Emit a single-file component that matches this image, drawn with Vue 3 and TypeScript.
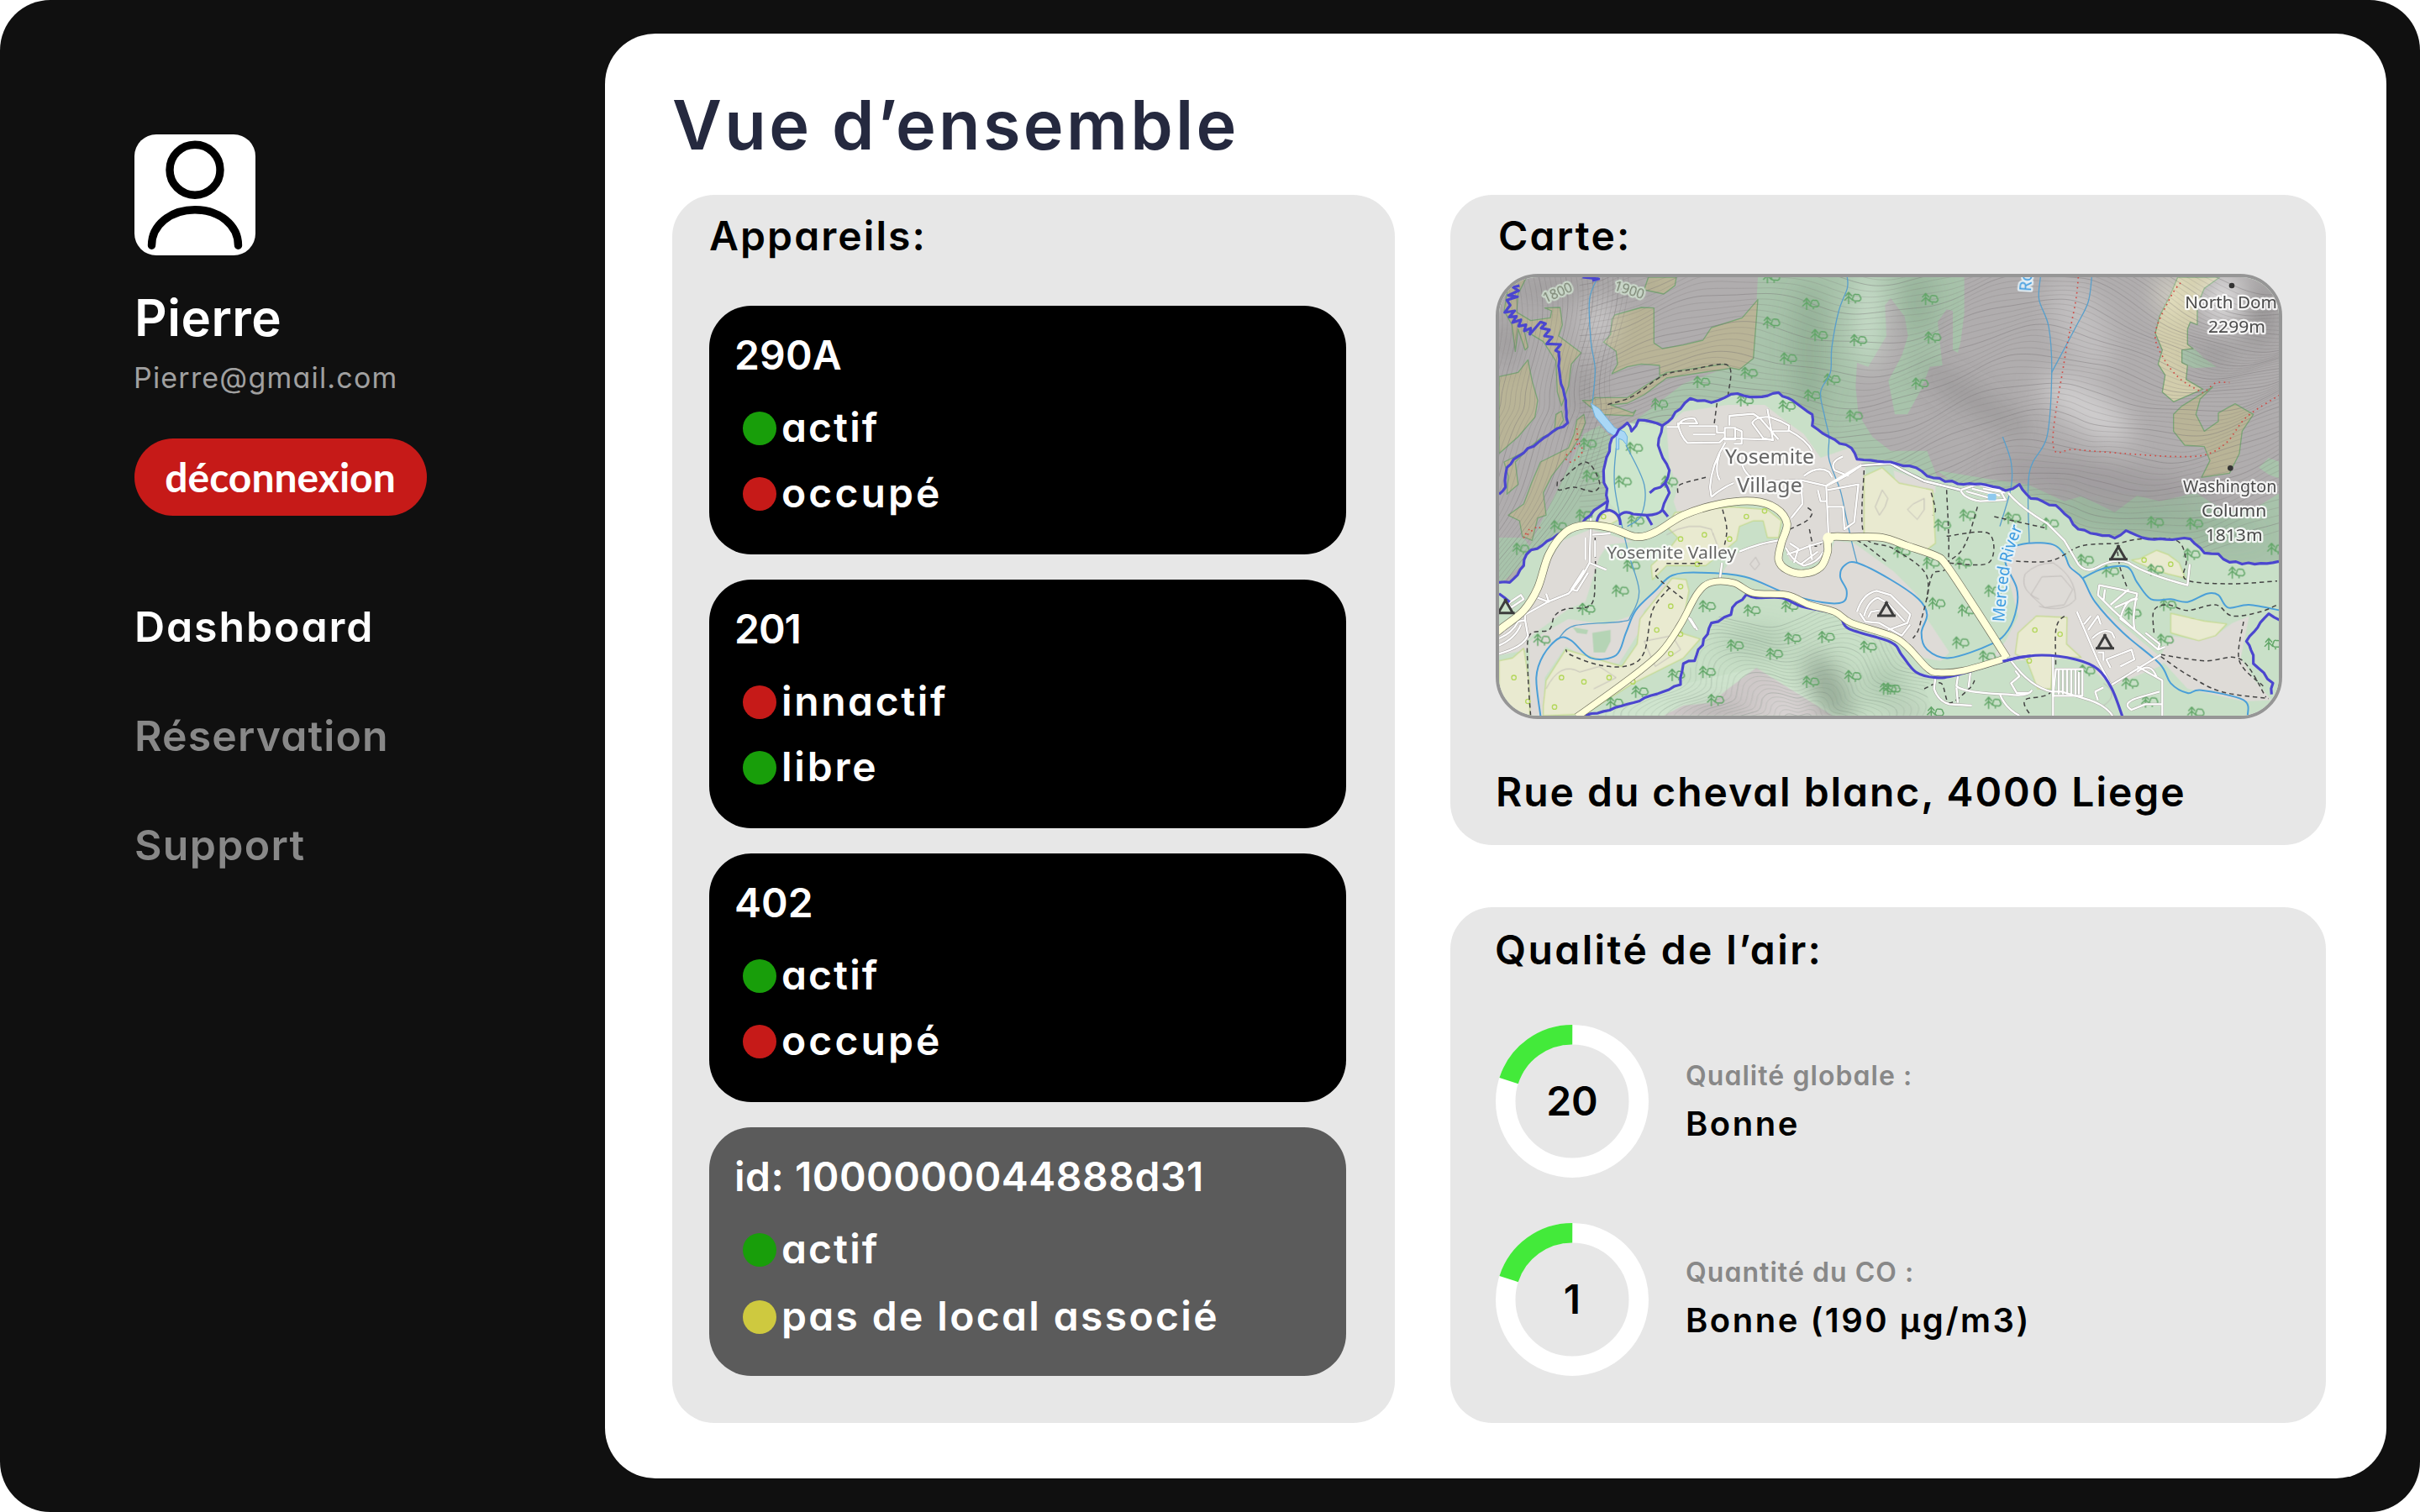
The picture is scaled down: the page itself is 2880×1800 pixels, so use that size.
<script setup lang="ts">
type Tone = 'ok' | 'bad' | 'warn'
interface Status { label: string; tone: Tone; tracking: number }
interface Device { name: string; unassigned?: boolean; tracking: number; statuses: Status[] }

const actif: Status = { label: 'actif', tone: 'ok', tracking: 2.1 }
const occupe: Status = { label: 'occupé', tone: 'bad', tracking: 3.1 }

const devices: Device[] = [
  { name: '290A', tracking: 0.2, statuses: [actif, occupe] },
  {
    name: '201',
    tracking: -1,
    statuses: [
      { label: 'innactif', tone: 'bad', tracking: 2.6 },
      { label: 'libre', tone: 'ok', tracking: 2.8 },
    ],
  },
  { name: '402', tracking: 0, statuses: [actif, occupe] },
  {
    name: 'id: 1000000044888d31',
    tracking: 0.5,
    unassigned: true,
    statuses: [actif, { label: 'pas de local associé', tone: 'warn', tracking: 2.35 }],
  },
]

const menu = [
  { label: 'Dashboard', active: true, tracking: 1.9 },
  { label: 'Réservation', active: false, tracking: 1.1 },
  { label: 'Support', active: false, tracking: 1.3 },
]

const gauges = [
  { value: 20, percent: 20, label: 'Qualité globale :', text: 'Bonne' },
  { value: 1, percent: 20, label: 'Quantité du CO :', text: 'Bonne (190 µg/m3)' },
]
const ringLength = 2 * Math.PI * 79.25

/* ---- map geometry ---- */
function points(src: string): number[][] {
  return src.trim().split(/\s+/).map((p) => p.split(',').map(Number))
}
// Catmull-Rom curve through the listed points
function curve(src: string): string {
  const p = points(src)
  let d = `M${p[0][0]} ${p[0][1]}`
  for (let i = 0; i < p.length - 1; i++) {
    const a = p[Math.max(i - 1, 0)]
    const b = p[i]
    const c = p[i + 1]
    const e = p[Math.min(i + 2, p.length - 1)]
    d += `C${b[0] + (c[0] - a[0]) / 6} ${b[1] + (c[1] - a[1]) / 6} ${c[0] - (e[0] - b[0]) / 6} ${c[1] - (e[1] - b[1]) / 6} ${c[0]} ${c[1]}`
  }
  return d
}
function noise(n: number): number {
  const s = Math.sin(n * 127.1) * 43758.5453
  return s - Math.floor(s)
}
// Small wobble added along a walking trail
function rough(src: string, amp: number): string {
  const p = points(src)
  const out: string[] = [`${p[0][0]},${p[0][1]}`]
  for (let i = 0; i < p.length - 1; i++) {
    const [x0, y0] = p[i]
    const [x1, y1] = p[i + 1]
    const len = Math.hypot(x1 - x0, y1 - y0)
    const n = Math.max(1, Math.round(len / 22))
    for (let k = 1; k <= n; k++) {
      const t = k / n
      const j = k === n ? 0 : (noise(i * 13 + k) - 0.5) * 2 * amp
      out.push(`${x0 + (x1 - x0) * t - ((y1 - y0) / len) * j},${y0 + (y1 - y0) * t + ((x1 - x0) / len) * j}`)
    }
  }
  return 'M' + out.join('L')
}

const northEdge =
  '42,1120 80,1120 130,1060 140,1020 250,950 320,920 415,840 430,830 415,720 445,605 500,550 515,580 540,540 625,560 690,500 725,463 800,478 870,448 960,458 1040,442 1090,470 1160,520 1160,560 1220,600 1300,640 1320,680 1440,690 1530,710 1570,740 1680,768 1760,768 1850,792 1900,770 1940,820 2030,845 2080,890 2110,930 2240,962 2280,935 2360,965 2510,965 2560,1015 2610,1018 2650,1048 2740,1055 2826,1045'

const forests = [
  '966,30 1703,30 1703,160 1690,260 1680,300 1662,290 1662,150 1640,145 1608,190 1625,345 1580,350 1550,430 1500,520 1455,520 1432,400 1480,310 1502,240 1490,170 1440,105 1420,130 1425,240 1360,350 1320,335 1315,420 1325,520 1375,600 1440,650 1570,650 1605,740 1680,760 1680,790 1300,700 1000,500 640,560 500,560 570,510 700,410 850,355 900,360 950,320',
  '1605,720 1800,752 1930,770 2060,830 2120,812 2180,840 2240,870 2320,810 2400,830 2530,800 2640,870 2750,850 2830,800 2830,1080 2200,980 1900,850 1700,790',
  '2480,285 2525,285 2560,320 2604,350 2520,355 2480,335',
  '2755,710 2790,675 2830,690 2830,750 2790,735',
  '42,960 130,960 150,990 190,910 250,790 300,690 345,590 400,560 440,600 420,840 250,960 120,1060 42,1130',
]
const scrubs = [
  '455,165 550,138 595,140 595,265 625,285 700,272 770,255 800,210 910,175 966,110 950,320 900,360 850,350 700,365 615,380 615,345 550,340 500,350 445,375 465,340 460,295 415,262 440,235 445,180',
  '385,460 500,460 560,420 640,370 850,340 870,355 640,390 560,450 500,480 440,486 520,515 530,505 520,525 400,520 340,470 370,470',
  '42,385 110,370 145,325 160,400 180,470 170,530 110,600 42,660',
  '100,30 140,30 110,90 105,155 155,185 225,175 230,150 205,140 260,138 268,200 255,240 335,300 300,340 290,420 265,490 250,440 245,330 200,260 150,230 130,215 145,280 135,290 110,215 100,295 88,200 60,150 75,60',
  '265,508 272,540 250,575 160,630 100,690 110,770 70,805 75,740 60,690 130,655 190,605 240,580 245,520',
  '320,540 345,520 350,550 330,600 300,650 230,740 200,800 210,880 180,890 160,970 125,955 115,900 75,880 130,840 160,760 190,690 290,640 310,590',
  '575,30 675,30 670,60 630,90 560,75',
  '2545,465 2530,520 2560,580 2610,545 2610,515 2670,482 2735,520 2695,580 2685,660 2650,730 2550,745 2580,685 2560,635 2490,630 2450,580 2450,520 2480,490 2590,422',
]
const sunnyScrub =
  '2465,30 2615,30 2560,70 2535,130 2535,200 2510,190 2500,215 2500,270 2520,285 2480,290 2480,335 2500,345 2495,395 2555,430 2450,475 2410,440 2420,380 2395,340 2410,290 2385,230 2400,170 2440,90'
const bareGround = [
  '640,560 700,510 860,485 990,485 1060,540 1130,590 1190,675 1290,640 1350,700 1345,960 1240,960 1200,1040 1130,1060 1080,1040 1050,960 1070,900 1020,850 940,830 820,840 680,875 665,830 680,780 650,700',
  '270,970 370,930 520,975 430,985 400,1030 350,1190 290,1215 170,1300 140,1330 150,1360 42,1380 42,1290 160,1190 220,1040',
  '150,1330 290,1250 420,1270 510,1240 560,1180 650,1110 680,1110 560,1220 540,1300 470,1410 380,1400 280,1350 205,1460 200,1596 150,1596',
  '880,1020 1040,965 1060,1060 1130,1090 1220,1030 1240,970 1310,980 1450,1080 1530,1160 1580,1230 1570,1250 1650,1370 1620,1400 1560,1390 1450,1310 1300,1250 1040,1160 920,1095 840,1085',
  '1850,1060 1880,990 1940,975 2020,980 2060,1030 2130,1110 2180,1200 2420,1400 2400,1420 2230,1490 2110,1390 1880,1400 1850,1370 1800,1390 1850,1330 1895,1240',
  '2440,1310 2540,1328 2600,1310 2660,1265 2720,1240 2690,1390 2740,1470 2800,1540 2700,1545 2500,1500 2400,1390',
  '1450,720 1600,775 1600,800 1560,800 1500,800 1460,770',
]
const meadows = [
  '670,870 870,850 1000,860 1050,900 1040,960 1000,960 985,900 950,900 900,920 890,970 780,1060 640,1060 590,1110 585,1060 650,1000 680,960 640,920',
  '200,1560 210,1470 280,1360 480,1420 535,1340 545,1250 600,1180 660,1105 710,1110 720,1150 690,1300 760,1322 700,1390 520,1480 350,1590 200,1596',
  '42,1400 90,1390 130,1355 150,1480 152,1596 42,1596',
  '1345,740 1410,710 1470,765 1590,790 1600,980 1560,1010 1450,970 1345,955',
  '1885,1375 1895,1300 1960,1240 2070,1245 2068,1340 2120,1388 2020,1385 2012,1500 1965,1500 1925,1395',
  '2300,1040 2330,1035 2390,1005 2430,1020 2470,1050 2492,1105 2430,1090 2370,1070',
  '2440,1230 2560,1258 2640,1268 2600,1310 2540,1328 2440,1300',
  '395,905 410,865 450,865 470,895 440,912',
]
const streams = [
  '395,30 365,110 370,260 385,360 375,480',
  '1285,30 1285,70 1255,150 1230,280 1225,370 1190,440 1205,530 1220,600 1220,680 1260,790 1280,880 1300,970 1320,1050',
  '1975,30 1970,110 2005,210 2015,380 1998,600 1935,730 1935,980',
  '2158,30 2145,120 2100,210 2015,370',
  '1840,600 1870,690 1870,780 1830,920',
  '460,640 455,780 500,1000 542,1150 512,1240 480,1260 310,1275 255,1320',
  '495,630 560,770 550,880 500,920',
]
const rivers = [
  '190,1596 175,1460 200,1380 255,1320 300,1328 370,1390 460,1380 495,1300 530,1220 600,1150 660,1095 760,1085 920,1100 1070,1160 1200,1192 1270,1190 1283,1150 1260,1100 1275,1060 1320,1050 1440,1110 1540,1180 1570,1235 1550,1300 1570,1360 1650,1390 1800,1340 1860,1290 1890,1210 1890,1140 1850,1050 1870,1000 1930,980 2020,985 2060,1020 2080,1065 2125,1105 2170,1190 2270,1300 2400,1410 2440,1480 2500,1515 2550,1505 2700,1540 2715,1596',
  '2125,1105 2200,1070 2285,1065 2320,1120 2370,1180 2440,1180 2500,1190 2570,1160 2610,1165 2645,1210 2720,1200 2830,1220',
]
const trails = [
  rough(northEdge, 5),
  'M115 60L92 66L112 78L75 95L108 100L70 112L82 130L62 156L98 150L78 172L104 170L90 192L120 182L112 205L138 200L132 222L155 212L152 234L190 190L208 196L192 212L222 218L204 240L232 244L212 268L262 270L244 292L260 300',
  rough('255,300 258,370 275,450 287,550 200,605 110,670 70,710 65,780 42,805', 4),
  rough('625,560 610,630 650,720 635,765 580,800', 4),
  rough('635,765 650,800 625,860 645,885', 3),
  'M390 910Q395 865 435 862Q475 872 475 915M470 882Q490 860 520 876L570 880Q610 880 625 862M568 880L588 915M430 830L425 860M340 30L398 36L375 42',
  rough('350,1596 500,1555 690,1485 700,1410 740,1400 800,1265 870,1235 875,1210 925,1163', 5),
  curve('925,1163 960,1175 1050,1175 1120,1205 1250,1235 1290,1285 1440,1333 1480,1380 1530,1440 1600,1460 1680,1450 1870,1395 1980,1380 2100,1395 2180,1430 2230,1500 2268,1600'),
  rough('2830,1255 2790,1232 2710,1330 2735,1380 2735,1410 2805,1480 2800,1520', 4),
  rough('42,1160 80,1190', 2),
]
const roads = [
  '20,1310 50,1285 130,1220 180,1140 220,1020 280,940 350,915 440,925 530,957 600,940 700,880 830,840 950,830 1030,855 1070,910 1050,980 1040,1040 1070,1075 1130,1088 1190,1065 1215,1010 1220,960 1300,958 1410,960 1500,990 1600,1025 1640,1060 1740,1210 1855,1390',
  '320,1600 500,1470 620,1370 690,1270 750,1160 800,1120 880,1122 950,1158 1070,1165 1150,1200 1240,1225 1300,1265 1440,1310 1500,1350 1570,1425 1610,1442 1700,1435 1855,1390',
]
const streets = [
  'M640 565H680Q690 530 740 535L750 552H680Q690 600 715 622L830 620L845 605L1010 610M720 562H820V585L850 585M735 592H815M865 560V525L950 518L975 535L1010 575L1040 610M848 568H885V610H848ZM885 570L908 580V625H880',
  'M945 550Q960 525 1010 530L1050 545L1078 560L1075 580L1018 580M945 550L985 605L1020 612L1000 500M1078 578Q1140 610 1160 650M850 620Q800 700 795 780L800 815M830 660Q810 720 830 755',
  'M800 815Q840 780 880 765M910 700Q930 760 1000 760L1120 755L1210 775Q1290 740 1335 700M1130 740Q1180 700 1220 725L1232 745M1270 670Q1220 690 1240 720L1290 740M1120 755L1125 840L1085 890M1210 775L1218 950M1180 790L1190 830H1215M1215 850H1270L1275 930L1310 905L1325 770L1215 790',
  'M1065 995Q1090 1045 1130 1060Q1180 1050 1200 1010M1070 1020L1100 1010L1150 990L1200 975M1095 1050L1110 1000L1080 980M1160 1040L1150 985M1120 1055L1180 1010',
  'M900 1010Q970 980 1040 970M838 1050L830 1110',
  'M370 890L365 1050L425 1075M375 950L440 945M350 960V1040M385 970V1030M365 1050Q330 1120 290 1160L215 1190L135 1235V1260M345 1075L300 1145L320 1150L360 1085M210 1160L220 1190L180 1175',
  'M42 1320Q90 1300 110 1260L135 1255L145 1310Q130 1350 42 1375M42 1345Q100 1320 120 1270M75 1195L120 1165L130 1180L85 1210Z',
  'M1320 1225Q1340 1160 1390 1150L1440 1165L1510 1235L1500 1265L1430 1290M1345 1240Q1360 1185 1395 1175L1430 1195L1490 1260M1330 1230L1350 1260L1400 1265L1480 1310L1510 1270M1360 1245L1370 1225L1400 1220',
  'M715 1240L740 1280L725 1250L750 1290',
  'M1600 1460L1595 1500Q1610 1545 1650 1555L1730 1560M1680 1455L1675 1490Q1700 1515 1860 1520Q1930 1530 1945 1505M1725 1440L1718 1495M1675 1495L1680 1550M1830 1520Q1850 1570 1900 1596M2020 1380V1600M1870 1400Q1940 1495 2015 1510H2050L2150 1540Q2210 1560 2235 1600M1885 1435L1900 1455L1870 1480L1890 1515H1930',
  'M2030 1430H2125V1525H2020ZM2040 1430V1520M2055 1430V1520M2070 1430V1520M2085 1430V1520M2100 1430V1520M2112 1440V1520M2170 1510L2200 1495M2170 1510L2180 1540',
  'M1860 800Q1900 850 2000 910L2060 970L2110 1055Q2140 1090 2180 1065Q2240 1030 2290 1050Q2350 1090 2500 1130L2508 1055',
  'M1690 790L1750 770L1830 790L1850 825L1760 830Q1700 820 1690 790M1710 795L1800 820M1730 785L1830 810M1770 785L1850 800',
  'M2185 1130L2260 1145L2320 1160Q2300 1250 2312 1290L2235 1220L2180 1165ZM2205 1145L2200 1185M2320 1175L2240 1210M2290 1145L2225 1200M2312 1290L2260 1250Q2280 1170 2322 1180M2312 1290L2395 1360L2420 1350M2350 1300L2400 1340L2395 1360',
  'M2105 1225L2180 1400L2225 1485M2130 1270L2155 1240M2145 1290L2180 1240L2190 1270M2160 1320Q2200 1280 2230 1300L2240 1320M2180 1370L2200 1370V1400M2225 1425L2210 1395L2300 1360L2310 1395L2260 1420M2230 1485L2405 1378M2320 1420L2410 1470V1600M2320 1440Q2370 1400 2390 1460M2300 1575Q2260 1550 2330 1530L2400 1510M2300 1575L2350 1555H2410',
]
const paths = [
  '430,485 520,455 630,380 730,360 860,345 860,450',
  '820,480 810,555',
  '250,760 255,790 310,780 380,795 400,760 350,690 260,760',
  '680,800 690,770 780,745',
  '1345,720 1345,950 1450,1000 1570,1100 1545,1270 1520,1320',
  '1585,800 1600,860 1590,880',
  '1640,790 1645,1050 1590,1090 1570,1180',
  '1640,955 1790,945 1790,1050 1640,1050',
  '1810,885 1990,925',
  '1750,850 1720,950 1690,1010 1640,1050',
  '1860,1043 2010,1043 2120,990 2250,980 2330,965 2460,970 2495,1040 2495,1110 2650,1125 2820,1115',
  '2250,1010 2260,1070 2285,1140',
  '2380,1300 2380,1220 2430,1200 2500,1220 2600,1200 2660,1240 2760,1225 2820,1200',
  '2405,1378 2560,1400 2690,1395 2780,1530',
  '2405,1385 2500,1450 2620,1510 2790,1535',
  '2700,1260 2685,1400 2770,1490',
  '840,860 855,940 830,1050',
  '640,1052 780,1052',
  '610,1070 605,1100 700,1180',
  '650,1140 590,1220 560,1370 500,1418 400,1415 300,1380 280,1360',
  '385,960 385,1100 370,1200 280,1215 240,1240 220,1290 150,1310 145,1440 155,1600',
  '1080,930 1140,900 1160,870 1140,850',
  '1150,930 1170,990 1230,960 1320,970 1430,1050',
  '2060,1240 2030,1290 2020,1500 1920,1540 1940,1596',
  '1560,1500 1620,1480 1650,1550 1720,1500 1740,1470',
]
const closedPaths = [
  '2110,30 2100,120 2060,330 2020,630 2100,645 2280,660 2440,670 2560,665 2640,620 2710,530 2830,450',
  '2475,50 2440,100 2385,230 2415,320 2470,390 2540,435 2560,440 2600,408 2650,406',
  '320,570 320,630 280,670 300,690 340,650 310,600',
  '150,930 130,960 180,920 190,940',
]
const trees =
  '1150,125 1010,192 1180,237 1070,320 930,372 760,404 610,483 915,470 1065,490 1225,395 1155,452 1305,525 1320,255 1300,104 1010,30 365,740 480,760 520,640 645,760 355,625 1575,108 1585,245 1540,410 340,880 250,920 115,1000 525,900 510,1060 470,1150 350,1215 190,1325 780,1205 940,1220 1075,1205 880,1345 1085,1320 1020,1375 1205,1315 1355,1350 670,1450 780,1440 540,1510 450,1550 1150,1475 1300,1455 1425,1500 810,1540 1710,880 1870,890 2005,910 1475,1010 1580,1050 1695,1050 1620,915 2380,905 2520,910 2130,1040 2220,1080 2510,1020 2380,1075 2670,1085 2810,1000 1600,1195 1705,1220 1685,1335 1780,1385 2300,1230 2425,1200 2415,1325 2800,1340 2290,1480 2360,1545 2525,1585 1800,1550 1595,1585 2135,1435 1800,1150 1440,1500'
const orchard =
  '690,965 775,950 865,965 925,885 990,865 690,1135 655,1205 605,1290 655,1375 690,1305 265,1460 345,1475 435,1460 520,1475 240,1565 95,1460 145,1545 750,1055 415,885 1955,1290 2045,1305 1935,1400 2345,1040 2440,1055'
const tents = '65,1207 1425,1217 2253,1015 2205,1333'

// Height lines of the north wall, the west gullies and the south hill
const contours: string[] = []
for (let k = 0; k < 62; k++) {
  const p: string[] = []
  for (let x = 330; x <= 2860; x += 70) {
    const y =
      k * 20 - 170 +
      70 * Math.sin(x / 190 + k * 0.02) +
      55 * Math.sin(x / 430 + 1.2 - k * 0.035) +
      (x > 2150 ? (x - 2150) * 0.22 * Math.cos(k * 0.07) : 0) +
      9 * Math.sin(x / 61 + k * 0.4)
    p.push(`${x},${Math.round(y)}`)
  }
  contours.push(curve(p.join(' ')))
}
for (let k = 0; k < 26; k++) {
  const p: string[] = []
  for (let y = 20; y <= 1180; y += 60) {
    const x = 20 + k * 18 + 34 * Math.sin(y / 120 + k * 0.05) - Math.max(0, y - 500) * 0.55
    p.push(`${Math.round(x)},${y}`)
  }
  contours.push(curve(p.join(' ')))
}
const hill: string[] = []
for (let k = 0; k < 26; k++) {
  const p: string[] = []
  for (let a = 0; a <= 20; a++) {
    const t = Math.PI + (a / 20) * Math.PI
    const r = 60 + k * 18
    const w = 1 + 0.13 * Math.sin(a * 1.1 + k * 0.04)
    p.push(`${Math.round(1110 + Math.cos(t) * r * 1.35 * w)},${Math.round(1640 + Math.sin(t) * r * 0.82 * w)}`)
  }
  hill.push(curve(p.join(' ')))
}
const knolls = [
  'M1980 1100L2050 1097L2090 1145L2060 1200L1990 1210L1940 1165Z',
  'M1970 1180Q1900 1150 1920 1090Q1960 1050 2020 1050Q2100 1100 2100 1180Q2060 1230 1970 1205',
  'M938 1055L958 1030L972 1055L955 1075Z',
  'M1520 840L1560 820L1560 860L1535 895L1500 860Z',
  'M1420 850L1430 820L1410 790L1385 850L1400 880Z',
  'M210 1500Q260 1400 330 1440L400 1420L460 1460L380 1500',
  'M560 1330L660 1310L690 1360L600 1420Z',
  'M2200 1480Q2260 1520 2200 1560',
  'M640 950Q720 900 800 930L830 1010',
]
</script>

<template>
  <div class="app">
    <aside class="sidebar">
      <div class="avatar">
        <svg viewBox="0 0 144 144" fill="none" stroke="#000" stroke-width="9.4" stroke-linecap="round">
          <circle cx="72" cy="42.2" r="30" />
          <path d="M20.5 132.3C20.5 108 43 89.8 72 89.8S123.5 108 123.5 132.3" />
        </svg>
      </div>
      <div class="user-name">Pierre</div>
      <div class="user-mail">Pierre@gmail.com</div>
      <button class="logout">déconnexion</button>
      <nav class="menu">
        <a
          v-for="m in menu"
          :key="m.label"
          :class="{ active: m.active }"
          :style="{ letterSpacing: m.tracking + 'px' }"
          >{{ m.label }}</a
        >
      </nav>
    </aside>

    <main class="main">
      <h1>Vue d’ensemble</h1>
      <div class="columns">
        <section class="panel devices">
          <h2>Appareils:</h2>
          <div class="device-list">
            <article v-for="d in devices" :key="d.name" class="device" :class="{ unassigned: d.unassigned }">
              <div class="device-name" :style="{ letterSpacing: d.tracking + 'px' }">{{ d.name }}</div>
              <div v-for="s in d.statuses" :key="s.label" class="status">
                <i class="dot" :class="s.tone"></i>
                <span :style="{ letterSpacing: s.tracking + 'px' }">{{ s.label }}</span>
              </div>
            </article>
          </div>
        </section>

        <div class="side">
          <section class="panel location">
            <h2>Carte:</h2>
            <div class="map">
              <svg viewBox="42 30 2784 1566" preserveAspectRatio="none" stroke-linejoin="round">
                <defs>
                  <filter id="soft" x="-50%" y="-50%" width="200%" height="200%">
                    <feGaussianBlur stdDeviation="46" />
                  </filter>
                  <clipPath id="wall">
                    <path :d="'M42 0L' + northEdge.replace(/ /g, 'L') + 'L2830 0Z'" />
                  </clipPath>
                  <clipPath id="slope">
                    <path
                      d="M350 1596L690 1485L740 1400L800 1265L925 1163L1050 1175L1250 1235L1440 1333L1530 1440L1600 1460L1560 1500L1600 1596Z"
                    />
                  </clipPath>
                  <g id="tree" fill="none" stroke="#62a668" stroke-width="4.5">
                    <path d="M-10 22V-20M-22 -6L-10 -20L2 -6M-25 9L-10 -6L5 9" />
                    <path d="M14 20V11M9 10Q0 4 7 -4Q8 -16 19 -12Q30 -14 31 -4Q38 4 28 11Z" />
                  </g>
                </defs>

                <rect x="42" y="30" width="2784" height="1566" fill="#c9e0c8" />
                <g clip-path="url(#wall)">
                  <rect x="42" y="0" width="2784" height="1160" fill="#b0adae" />
                  <polygon v-for="(f, i) in forests" :key="'f' + i" :points="f" fill="#a8c3ab" />
                  <polygon v-for="(s, i) in scrubs" :key="'s' + i" :points="s" fill="#b9b497" stroke="#7ba577" stroke-width="4" />
                  <polygon :points="sunnyScrub" fill="#d2cdac" stroke="#7ba577" stroke-width="4" />
                  <g filter="url(#soft)">
                    <ellipse cx="400" cy="190" rx="40" ry="90" fill="#fff" opacity=".45" />
                    <ellipse cx="1360" cy="170" rx="45" ry="190" fill="#e6f5e6" opacity=".6" />
                    <ellipse cx="2140" cy="500" rx="190" ry="70" transform="rotate(35 2140 500)" fill="#fff" opacity=".42" />
                    <ellipse cx="2120" cy="200" rx="90" ry="190" transform="rotate(-25 2120 200)" fill="#fff" opacity=".22" />
                    <ellipse cx="2630" cy="110" rx="60" ry="90" fill="#fff" opacity=".65" />
                    <ellipse cx="2440" cy="90" rx="40" ry="80" fill="#fffbe0" opacity=".6" />
                    <ellipse cx="2750" cy="160" rx="50" ry="120" fill="#555" opacity=".35" />
                    <ellipse cx="2600" cy="300" rx="70" ry="60" fill="#666" opacity=".25" />
                    <ellipse cx="1740" cy="470" rx="260" ry="44" transform="rotate(32 1740 470)" fill="#555" opacity=".22" />
                    <ellipse cx="2200" cy="760" rx="420" ry="60" transform="rotate(8 2200 760)" fill="#665f66" opacity=".24" />
                    <ellipse cx="1150" cy="300" rx="60" ry="260" fill="#5a7a62" opacity=".28" />
                    <ellipse cx="1540" cy="120" rx="60" ry="130" fill="#5a7a62" opacity=".25" />
                    <ellipse cx="300" cy="70" rx="260" ry="30" fill="#555" opacity=".28" />
                    <ellipse cx="70" cy="260" rx="28" ry="80" fill="#555" opacity=".35" />
                    <ellipse cx="330" cy="440" rx="26" ry="110" fill="#555" opacity=".3" />
                    <ellipse cx="2350" cy="900" rx="420" ry="26" transform="rotate(6 2350 900)" fill="#587a60" opacity=".4" />
                  </g>
                  <path
                    v-for="(c, i) in contours"
                    :key="'c' + i"
                    :d="c"
                    fill="none"
                    stroke="#777274"
                    :stroke-width="i % 5 ? 1.6 : 3"
                    opacity=".42"
                  />
                </g>

                <polygon points="445,605 500,550 625,560 612,630 650,720 640,860 480,880 430,830 415,720" fill="#cde6cc" />
                <polygon v-for="(g, i) in bareGround" :key="'b' + i" :points="g" fill="#dedbd7" />
                <polygon v-for="(m, i) in meadows" :key="'m' + i" :points="m" fill="#e9ead0" stroke="#c3d98c" stroke-width="3.5" />
                <path v-for="(k, i) in knolls" :key="'k' + i" :d="k" fill="none" stroke="#b9b5b2" stroke-width="2.5" />
                <path d="M375 1300L440 1290L440 1330L420 1370L380 1370Z M305 1280L360 1290L355 1305L320 1300Z" fill="#b5d4b5" />

                <g clip-path="url(#slope)">
                  <polygon points="350,1600 690,1485 960,1425 1260,1600" fill="#cfe4ce" />
                  <polygon points="620,1600 700,1560 800,1550 860,1500 960,1425 1080,1500 1240,1600" fill="#cfc9c9" />
                  <g filter="url(#soft)">
                    <ellipse cx="1220" cy="1500" rx="50" ry="140" transform="rotate(-28 1220 1500)" fill="#4d5f52" opacity=".5" />
                    <ellipse cx="960" cy="1330" rx="130" ry="50" fill="#7b9b80" opacity=".3" />
                    <ellipse cx="1420" cy="1480" rx="70" ry="60" fill="#7b9b80" opacity=".4" />
                    <ellipse cx="820" cy="1590" rx="110" ry="20" fill="#777" opacity=".5" />
                    <ellipse cx="1060" cy="1570" rx="50" ry="50" fill="#fff" opacity=".35" />
                    <ellipse cx="1500" cy="1590" rx="60" ry="20" fill="#777" opacity=".5" />
                  </g>
                  <path v-for="(h, i) in hill" :key="'h' + i" :d="h" fill="none" stroke="#73857a" :stroke-width="i % 5 ? 1.5 : 2.6" opacity=".4" />
                </g>

                <use v-for="(t, i) in points(trees)" :key="'t' + i" href="#tree" :x="t[0]" :y="t[1]" />
                <circle v-for="(o, i) in points(orchard)" :key="'o' + i" :cx="o[0]" :cy="o[1]" r="8" fill="none" stroke="#b4d75c" stroke-width="4" />

                <g fill="none" stroke="#5a9fca" stroke-width="4">
                  <path v-for="(s, i) in streams" :key="'st' + i" :d="curve(s)" />
                </g>
                <path
                  d="M370 480L400 500L455 568L490 582L500 600L498 630L484 612L470 606L470 645L460 645V600L430 582L385 528Z"
                  fill="#a9d7f5"
                  stroke="#6db3e2"
                  stroke-width="3"
                />
                <g fill="none" stroke="#4a9fd8" stroke-width="6">
                  <path v-for="(r, i) in rivers" :key="'r' + i" :d="curve(r)" />
                </g>
                <g fill="none" stroke="#444" stroke-width="4.5" stroke-dasharray="16 12">
                  <path v-for="(p, i) in paths" :key="'p' + i" :d="curve(p)" />
                </g>
                <g fill="none" stroke="#cf4b45" stroke-width="5" stroke-dasharray="5 13">
                  <path v-for="(p, i) in closedPaths" :key="'cp' + i" :d="curve(p)" />
                </g>
                <g fill="none" stroke="#aaa6a3" stroke-width="10">
                  <path v-for="(s, i) in streets" :key="'sc' + i" :d="s" />
                </g>
                <g fill="none" stroke="#fff" stroke-width="7">
                  <path v-for="(s, i) in streets" :key="'sf' + i" :d="s" />
                </g>
                <path d="M1335 702L1440 695Q1480 720 1560 758L1690 790" fill="none" stroke="#888" stroke-width="12" />
                <path d="M1210 775L1335 702L1440 695Q1480 720 1560 758L1690 790" fill="none" stroke="#fff" stroke-width="8" />
                <rect x="1787" y="803" width="30" height="24" rx="5" fill="#8ec9ee" />
                <g fill="none" stroke="#4b46cf" stroke-width="9.5">
                  <path v-for="(t, i) in trails" :key="'tr' + i" :d="t" />
                </g>
                <g fill="none" stroke="#6f6f5e" stroke-width="29">
                  <path :d="curve(roads[0])" />
                  <path :d="curve(roads[1])" stroke-width="26" />
                </g>
                <g fill="none" stroke="#ffffda" stroke-width="25">
                  <path :d="curve(roads[0])" />
                  <path :d="curve(roads[1])" stroke-width="22" />
                </g>
                <circle cx="1218" cy="962" r="20" fill="#ffffda" />
                <path d="M1840 1402L1870 1395Q1900 1385 1940 1382" fill="none" stroke="#4b46cf" stroke-width="9" />

                <g fill="none" stroke="#3c3c3c" stroke-width="9">
                  <path v-for="(t, i) in points(tents)" :key="'te' + i" :d="`M${t[0] - 26} ${t[1] + 22}L${t[0] + 3} ${t[1] - 28}M${t[0] - 3} ${t[1] - 28}L${t[0] + 26} ${t[1] + 22}M${t[0] - 33} ${t[1] + 22}H${t[0] + 33}`" />
                </g>
                <circle cx="2658" cy="60" r="10" fill="#333" />
                <circle cx="2653" cy="712" r="10" fill="#333" />

                <g class="place" text-anchor="middle" font-size="68">
                  <text x="1008" y="697" textLength="318" lengthAdjust="spacingAndGlyphs">Yosemite</text>
                  <text x="1008" y="799" textLength="232" lengthAdjust="spacingAndGlyphs">Village</text>
                </g>
                <g class="place" font-size="61">
                  <text x="427" y="1034" textLength="462" lengthAdjust="spacingAndGlyphs">Yosemite Valley</text>
                </g>
                <g class="peak" font-size="62">
                  <text x="2491" y="141" textLength="329" lengthAdjust="spacingAndGlyphs">North Dom</text>
                  <text x="2574" y="229" textLength="204" lengthAdjust="spacingAndGlyphs">2299m</text>
                  <text x="2484" y="798" textLength="334" lengthAdjust="spacingAndGlyphs">Washington</text>
                  <text x="2550" y="884" textLength="232" lengthAdjust="spacingAndGlyphs">Column</text>
                  <text x="2564" y="971" textLength="204" lengthAdjust="spacingAndGlyphs">1813m</text>
                </g>
                <path id="river-line" d="M1846 1262Q1852 1160 1862 1090Q1875 1000 1916 915" fill="none" />
                <text class="river" font-size="60"><textPath href="#river-line" textLength="345" lengthAdjust="spacingAndGlyphs">Merced River</textPath></text>
                <text class="river" font-size="58" transform="translate(1940 82) rotate(-86)">Ro</text>
                <text class="height" font-size="48" transform="translate(207 122) rotate(-24)">1800</text>
                <text class="height" font-size="48" transform="translate(450 74) rotate(18)">1900</text>
              </svg>
            </div>
            <p class="address">Rue du cheval blanc, 4000 Liege</p>
          </section>

          <section class="panel air">
            <h2>Qualité de l’air:</h2>
            <div class="gauges">
              <div v-for="g in gauges" :key="g.label" class="gauge">
                <div class="ring">
                  <svg viewBox="0 0 182 182" fill="none" stroke-width="23.5">
                    <circle cx="91" cy="91" r="79.25" stroke="#fff" />
                    <circle
                      cx="91"
                      cy="91"
                      r="79.25"
                      stroke="#43ea3a"
                      :stroke-dasharray="`${(ringLength * g.percent) / 100} ${ringLength}`"
                      :transform="`rotate(${-90 - g.percent * 3.6} 91 91)`"
                    />
                  </svg>
                  <span>{{ g.value }}</span>
                </div>
                <div class="gauge-text">
                  <div class="gauge-label">{{ g.label }}</div>
                  <div class="gauge-value">{{ g.text }}</div>
                </div>
              </div>
            </div>
          </section>
        </div>
      </div>
    </main>
  </div>
</template>

<style>
body {
  margin: 0;
  background: #fff;
}
</style>

<style scoped>
.app {
  display: flex;
  box-sizing: border-box;
  width: 2880px;
  height: 1800px;
  padding: 40px 40px 40px 0;
  border-radius: 60px;
  background: #101010;
  overflow: hidden;
  font-family: Inter, 'Noto Sans', sans-serif;
  font-weight: 640;
  font-feature-settings: 'cv11';
}

.sidebar {
  box-sizing: border-box;
  flex: none;
  width: 720px;
  padding: 120px 0 0 160px;
  color: #fff;
}
.avatar {
  width: 144px;
  height: 144px;
  border-radius: 26px;
  background: #fff;
}
.avatar svg {
  display: block;
}
.user-name {
  margin: 38px 0 0;
  font-size: 60px;
  line-height: 72px;
  letter-spacing: 0.5px;
}
.user-mail {
  margin: 16px 0 0 -1px;
  font-size: 34px;
  line-height: 40px;
  font-weight: 400;
  letter-spacing: 1.2px;
  color: #a0a0a0;
}
.logout {
  display: block;
  width: 348px;
  height: 92px;
  margin: 52px 0 0;
  padding: 0 1px 0 0;
  border: 0;
  border-radius: 46px;
  background: #c61a18;
  color: #fff;
  font: 700 48px/92px Lato, sans-serif;
}
.menu {
  display: flex;
  flex-direction: column;
  gap: 70px;
  margin: 102px 0 0;
}
.menu a {
  font-size: 50px;
  line-height: 60px;
  color: #888;
}
.menu a.active {
  color: #fff;
}

.main {
  box-sizing: border-box;
  flex: 1;
  height: 1720px;
  padding: 61px 72px 0 80px;
  border-radius: 60px;
  background: #fff;
}
h1,
h2,
p {
  margin: 0;
  font-weight: 640;
}
h1 {
  font-size: 81px;
  line-height: 96px;
  letter-spacing: 3.3px;
  color: #25293f;
}
.columns {
  display: flex;
  gap: 66px;
  height: 1462px;
  margin-top: 35px;
}
.panel {
  box-sizing: border-box;
  border-radius: 50px;
  background: #e7e7e7;
}
.panel h2 {
  font-size: 48px;
  line-height: 58px;
  color: #000;
}

.devices {
  width: 860px;
  padding: 19.5px 58px 0 44px;
}
.devices h2 {
  letter-spacing: 2.1px;
}
.device-list {
  display: flex;
  flex-direction: column;
  gap: 30px;
  margin-top: 54.5px;
}
.device {
  box-sizing: border-box;
  height: 296px;
  padding: 29.5px 0 0 30px;
  border-radius: 50px;
  background: #000;
  color: #fff;
  font-size: 48px;
  line-height: 58px;
}
.device.unassigned {
  background: #5b5b5b;
}
.status {
  display: flex;
  align-items: center;
  gap: 6px;
  height: 58px;
  margin: 20px 0 0 10px;
}
.device-name + .status {
  margin-top: 29.5px;
}
.unassigned .status:last-child {
  margin-top: 22px;
}
.status span {
  padding-bottom: 3px;
}
.dot {
  width: 40px;
  height: 40px;
  border-radius: 50%;
}
.dot.ok {
  background: #189e0a;
}
.dot.bad {
  background: #c61a18;
}
.dot.warn {
  background: #cec93f;
}

.side {
  display: flex;
  flex: 1;
  flex-direction: column;
  justify-content: space-between;
}
.location {
  height: 774px;
  padding: 19.5px 52px 0 54px;
}
.location h2 {
  padding-left: 3px;
  letter-spacing: 2.2px;
}
.map {
  box-sizing: border-box;
  width: 936px;
  height: 530px;
  margin-top: 16.5px;
  border: 4px solid #969696;
  border-radius: 50px;
  overflow: hidden;
}
.map svg {
  display: block;
  width: 928px;
  height: 522px;
}
.map text {
  font-family: 'Noto Sans', sans-serif;
  font-weight: 400;
  stroke: #fff;
  stroke-opacity: 0.85;
  stroke-width: 14px;
  paint-order: stroke;
}
.map .place text {
  fill: #666;
}
.map .peak text {
  fill: #4a4a4a;
}
.map text.river {
  fill: #3d9be0;
  stroke: #e8f4fb;
}
.map text.height {
  fill: #77806f;
  stroke: #cfdfcf;
}
.address {
  margin: 57.5px 0 0;
  font-size: 48px;
  line-height: 58px;
  letter-spacing: 1.95px;
  white-space: nowrap;
}

.air {
  height: 614px;
  padding: 21.5px 54px 0;
}
.air h2 {
  margin-left: -1px;
  letter-spacing: 2.4px;
}
.gauges {
  display: flex;
  flex-direction: column;
  gap: 54px;
  margin-top: 60.5px;
}
.gauge {
  display: flex;
  align-items: center;
  gap: 44px;
}
.ring {
  display: grid;
  width: 182px;
  height: 182px;
  place-items: center;
}
.ring svg,
.ring span {
  grid-area: 1 / 1;
}
.ring span {
  font-size: 48px;
  line-height: 58px;
}
.gauge-label {
  font-size: 32px;
  line-height: 40px;
  font-weight: 560;
  letter-spacing: 1.05px;
  color: #888;
}
.gauge-text {
  padding-top: 2px;
}
.gauge-value {
  margin-top: 12px;
  font-size: 40px;
  line-height: 50px;
  letter-spacing: 2.5px;
}
.gauge:last-child .gauge-text {
  padding: 0 0 2px;
}
</style>
